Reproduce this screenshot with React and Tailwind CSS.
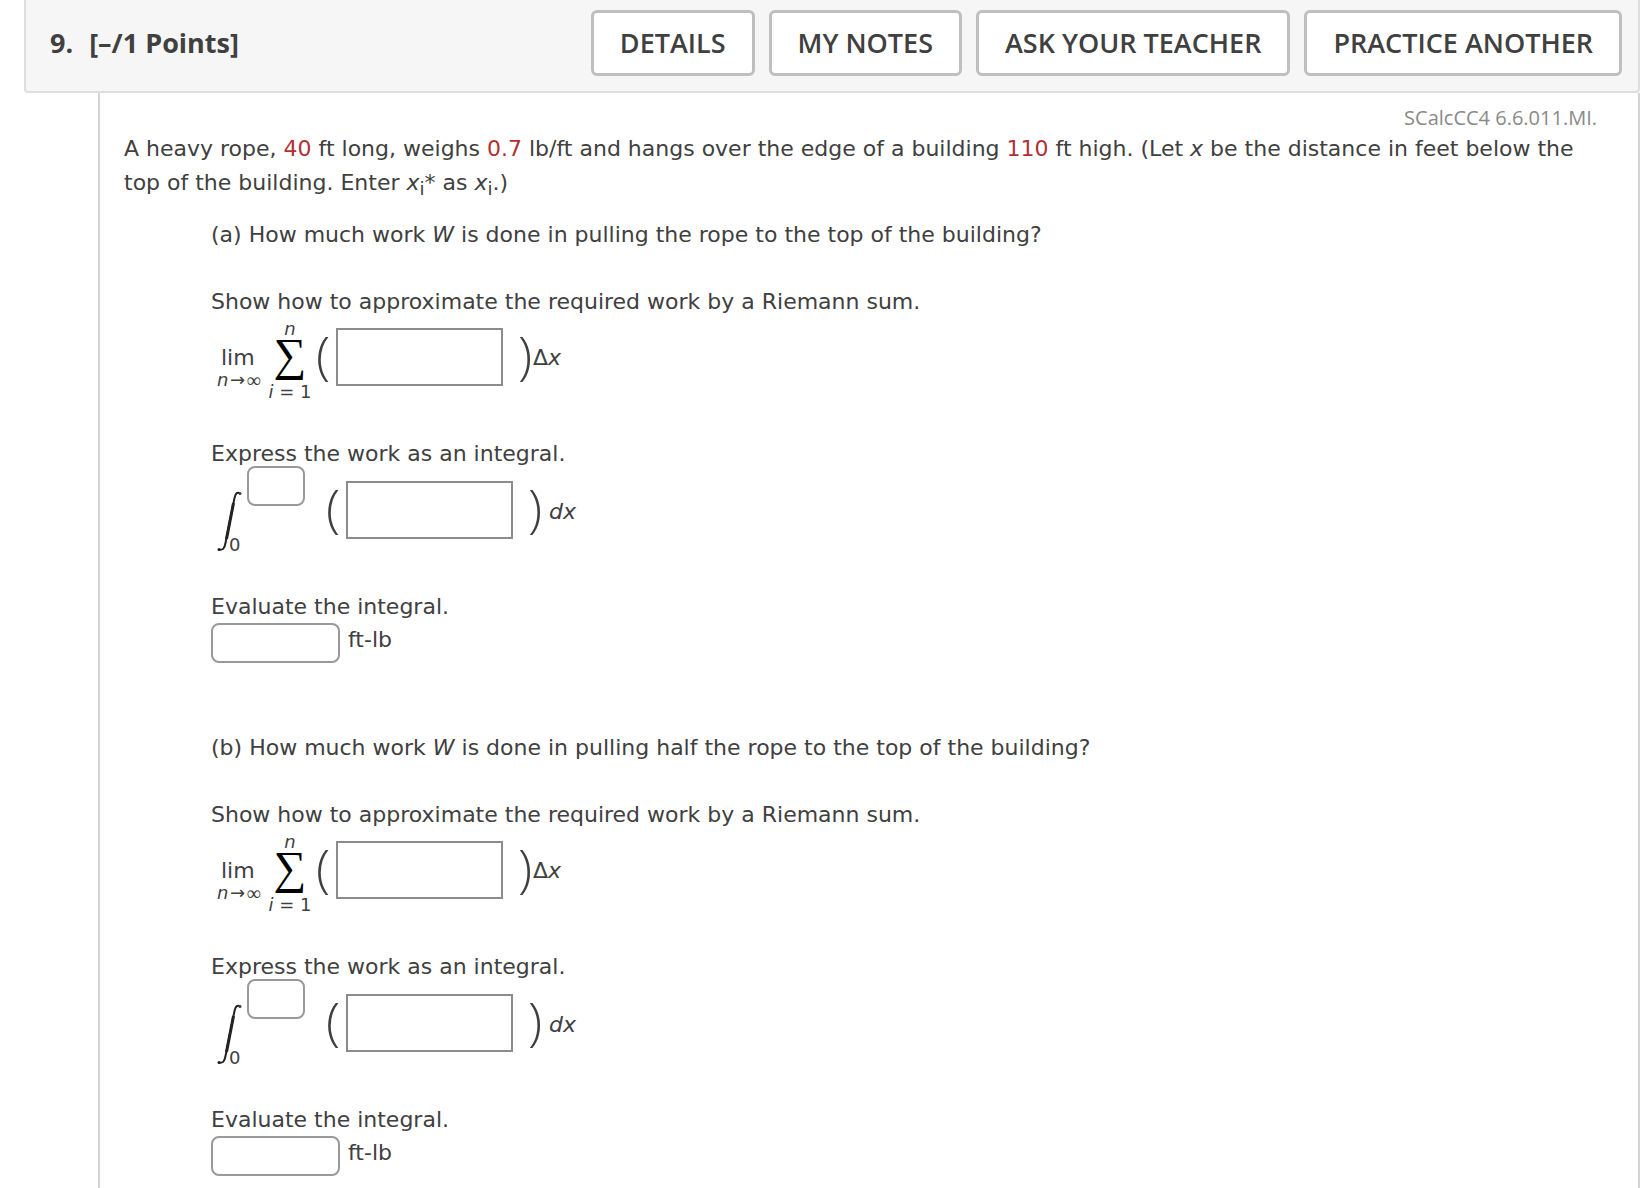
const actions = ["DETAILS", "MY NOTES", "ASK YOUR TEACHER", "PRACTICE ANOTHER"];

function Value({ children }) {
  return <span className="text-[#b03234]">{children}</span>;
}

function Paren({ children }) {
  return (
    <span className="w-4 pb-1.5 text-center font-['Open_Sans',sans-serif] text-[52px] font-light leading-[48px]">
      {children}
    </span>
  );
}

function MathInput({ label }) {
  return (
    <input
      type="text"
      aria-label={label}
      className="h-[58px] w-[167px] border-2 border-[#8c8c8c] bg-white px-2"
    />
  );
}

function IntegralSign() {
  return (
    <svg viewBox="0 0 26 64" className="h-16 w-[26px] shrink-0" role="img" aria-label="integral">
      <path
        d="M23.500 4.500C20.500 2.500 18.500 4 17.500 9L8.500 54C7.500 60 5.500 61.500 1.500 60.500"
        fill="none"
        stroke="#222"
        strokeWidth="2"
      />
      <path d="M16.500 14L9.500 50" fill="none" stroke="#222" strokeWidth="3" />
      <circle cx="23" cy="4.500" r="1.500" fill="#444" />
      <circle cx="2" cy="60.500" r="1.500" fill="#222" />
    </svg>
  );
}

function RiemannSum({ part }) {
  return (
    <div className="flex h-[84px] items-start">
      <div className="ml-1.5 mt-[26px] flex w-[50px] flex-col">
        <span className="pl-1 leading-[26px]">lim</span>
        <span className="flex items-center text-[18px] leading-[18px]">
          <i>n</i>
          <span className="w-[18px] text-center">→</span>
          <span className="font-['Liberation_Serif',serif] text-[20px]">∞</span>
        </span>
      </div>
      <div className="flex w-[46px] flex-col items-center">
        <i className="h-5 text-[18px] leading-5">n</i>
        <span className="h-[43px] font-['Liberation_Serif',serif] text-[46px] leading-8 text-black">
          ∑
        </span>
        <span className="h-5 whitespace-nowrap text-[18px] leading-5">
          <i>i</i> = 1
        </span>
      </div>
      <div className="ml-0.5 mt-[9px] flex items-center">
        <Paren>(</Paren>
        <span className="ml-[5px] mr-3.5 flex">
          <MathInput label={`Riemann sum term, part ${part}`} />
        </span>
        <Paren>)</Paren>
        <span className="pt-0.5">
          Δ<i>x</i>
        </span>
      </div>
    </div>
  );
}

function Integral({ part }) {
  return (
    <div className="flex h-[85px] items-start">
      <div className="ml-1.5 mt-[18px] flex h-[68px] w-[30px] items-end">
        <span className="-mr-3.5 flex h-[68px]">
          <IntegralSign />
        </span>
        <span className="text-[18px] leading-6">0</span>
      </div>
      <input
        type="text"
        aria-label={`Upper limit of integration, part ${part}`}
        className="-mt-[5px] h-10 w-[58px] rounded-lg border-2 border-[#999] bg-white px-2"
      />
      <div className="ml-5 mt-2.5 flex items-center">
        <Paren>(</Paren>
        <span className="ml-[5px] mr-3.5 flex">
          <MathInput label={`Integrand, part ${part}`} />
        </span>
        <Paren>)</Paren>
        <i className="ml-1.5 pt-1">dx</i>
      </div>
    </div>
  );
}

function Part({ name, children }) {
  return (
    <section>
      <p>
        ({name}) {children}
      </p>
      <p className="mt-[33px]">Show how to approximate the required work by a Riemann sum.</p>
      <RiemannSum part={name} />
      <p className="mt-[34px]">Express the work as an integral.</p>
      <Integral part={name} />
      <p className="mt-[34px]">Evaluate the integral.</p>
      <label className="-mt-px flex h-[41px] items-start gap-2">
        <input
          type="text"
          className="h-10 w-[129px] shrink-0 rounded-lg border-2 border-[#999] bg-white px-2"
        />
        <span>ft-lb</span>
      </label>
    </section>
  );
}

export default function App() {
  return (
    <main className="min-h-screen bg-white pl-6 text-[#404040]">
      <header className="flex h-[93px] items-start justify-between rounded-b border-x-2 border-b-2 border-[#dedede] bg-[#f6f6f6] pl-6 pr-4 pt-2.5 font-['Open_Sans',sans-serif] text-[27px]">
        <h1 className="flex h-[66px] items-center gap-4 whitespace-nowrap font-bold">
          <span>9.</span>
          <span>[–/1 Points]</span>
        </h1>
        <nav className="flex gap-3.5">
          {actions.map((a) => (
            <button
              key={a}
              type="button"
              className="h-[66px] whitespace-nowrap rounded-md border-3 border-[#bfbfbf] bg-white px-[26px] font-semibold"
            >
              {a}
            </button>
          ))}
        </nav>
      </header>
      <div className="ml-[74px] min-h-[1095px] border-x-2 border-[#d4d4d4] pb-8 pl-6 pr-[41px] pt-2.5 font-['DejaVu_Sans',sans-serif] text-[22px] leading-[34px]">
        <p className="text-right font-['Open_Sans',sans-serif] text-[20px] leading-[29px] text-[#8a8a8a]">
          SCalcCC4 6.6.011.MI.
        </p>
        <p>
          A heavy rope, <Value>40</Value> ft long, weighs <Value>0.7</Value> lb/ft and hangs over
          the edge of a building <Value>110</Value> ft high. (Let <i>x</i> be the distance in feet
          below the top of the building. Enter <i>x</i>
          <sub className="text-[18px] leading-none">i</sub>* as <i>x</i>
          <sub className="text-[18px] leading-none">i</sub>.)
        </p>
        <div className="ml-[87px] mt-[18px] flex flex-col gap-[67px]">
          <Part name="a">
            How much work <i>W</i> is done in pulling the rope to the top of the building?
          </Part>
          <Part name="b">
            How much work <i>W</i> is done in pulling half the rope to the top of the building?
          </Part>
        </div>
      </div>
    </main>
  );
}
